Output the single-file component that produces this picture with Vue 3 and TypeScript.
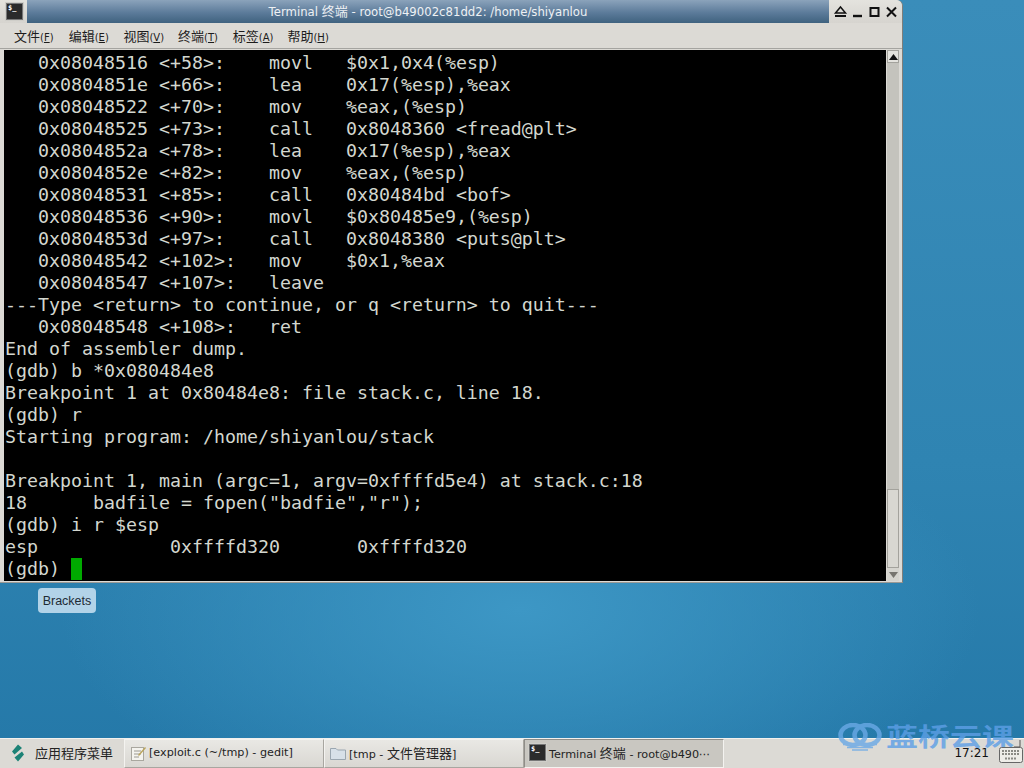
<script setup lang="ts">
const menus: [string, string][] = [
  ['文件', 'F'], ['编辑', 'E'], ['视图', 'V'], ['终端', 'T'], ['标签', 'A'], ['帮助', 'H'],
]
const lines: string[] = [
  '   0x08048516 <+58>:\tmovl   $0x1,0x4(%esp)',
  '   0x0804851e <+66>:\tlea    0x17(%esp),%eax',
  '   0x08048522 <+70>:\tmov    %eax,(%esp)',
  '   0x08048525 <+73>:\tcall   0x8048360 <fread@plt>',
  '   0x0804852a <+78>:\tlea    0x17(%esp),%eax',
  '   0x0804852e <+82>:\tmov    %eax,(%esp)',
  '   0x08048531 <+85>:\tcall   0x80484bd <bof>',
  '   0x08048536 <+90>:\tmovl   $0x80485e9,(%esp)',
  '   0x0804853d <+97>:\tcall   0x8048380 <puts@plt>',
  '   0x08048542 <+102>:\tmov    $0x1,%eax',
  '   0x08048547 <+107>:\tleave  ',
  '---Type <return> to continue, or q <return> to quit---',
  '   0x08048548 <+108>:\tret    ',
  'End of assembler dump.',
  '(gdb) b *0x080484e8',
  'Breakpoint 1 at 0x80484e8: file stack.c, line 18.',
  '(gdb) r',
  'Starting program: /home/shiyanlou/stack ',
  ' ',
  'Breakpoint 1, main (argc=1, argv=0xffffd5e4) at stack.c:18',
  '18\tbadfile = fopen("badfie","r");',
  '(gdb) i r $esp',
  'esp            0xffffd320\t0xffffd320',
]
</script>

<template>
  <div class="desktop">
    <section class="window">
      <header class="titlebar">
        <div class="app-icon"><span>$_</span></div>
        <div class="title">Terminal <span class="cjk">终端</span> - root@b49002c81dd2: /home/shiyanlou</div>
        <div class="controls">
          <svg width="15" height="15" viewBox="0 0 15 15"><path d="M7.5 3 L12.5 9 H2.5 Z" fill="none" stroke="#111" stroke-width="1.5"/><path d="M2 12 H13" stroke="#111" stroke-width="2"/></svg>
          <svg width="15" height="15" viewBox="0 0 15 15"><path d="M3 12 H12" stroke="#111" stroke-width="2.4"/></svg>
          <svg width="15" height="15" viewBox="0 0 15 15"><rect x="3.5" y="4" width="8" height="8" fill="none" stroke="#111" stroke-width="2"/></svg>
          <svg width="15" height="15" viewBox="0 0 15 15"><path d="M3 3.5 L12 12.5 M12 3.5 L3 12.5" stroke="#111" stroke-width="2"/></svg>
        </div>
      </header>
      <nav class="menubar">
        <span v-for="m in menus" :key="m[1]" class="menu">{{ m[0] }}<small>(<u>{{ m[1] }}</u>)</small></span>
      </nav>
      <div class="body">
        <div class="terminal">
          <div v-for="(l, i) in lines" :key="i" class="line">{{ l }}</div>
          <div class="line">(gdb) <span class="cursor"></span></div>
        </div>
        <div class="scrollbar">
          <div class="arrow"><svg width="9" height="6" viewBox="0 0 9 6"><path d="M4.5 0 L9 6 H0 Z" fill="#111"/></svg></div>
          <div class="trough"><div class="thumb"></div></div>
          <div class="arrow down"><svg width="9" height="6" viewBox="0 0 9 6"><path d="M0 0 H9 L4.5 6 Z" fill="#77756f"/></svg></div>
        </div>
      </div>
    </section>

    <div class="tooltip">Brackets</div>

    <div class="watermark">
      <svg width="44" height="28" viewBox="0 0 44 28">
        <ellipse cx="15" cy="12" rx="12.5" ry="10" fill="none" stroke="#6aa9e6" stroke-width="4.5"/>
        <ellipse cx="29" cy="12" rx="12.5" ry="10" fill="none" stroke="#6aa9e6" stroke-width="4.5"/>
        <path d="M5 21.5 H39 M9 24.5 H35 M14 27 H30" stroke="#6aa9e6" stroke-width="1.6"/>
      </svg>
      <span>蓝桥云课</span>
    </div>

    <footer class="taskbar">
      <div class="start">
        <svg width="14" height="18" viewBox="0 0 14 18"><path d="M7 0.5 L11 4 L3.5 10.5 L1 7.5 Z M11 7.5 L13 10.5 L7 17.5 L3.5 13.5 Z" fill="#1c8276"/></svg>
        <span>应用程序菜单</span>
      </div>
      <div class="task">
        <svg width="18" height="18" viewBox="0 0 18 18"><rect x="2.5" y="3.5" width="12" height="13" fill="#f4f3ee" stroke="#a9a79f"/><path d="M5 7 H12 M5 10 H12 M5 13 H10" stroke="#9c9a92"/><path d="M9 11 L16 3 L17 4 L10 12 Z" fill="#b9a35a"/></svg>
        <span>[exploit.c (~/tmp) - gedit]</span>
      </div>
      <div class="task">
        <svg width="18" height="18" viewBox="0 0 18 18"><path d="M1.5 4.5 H7 L8.5 6 H16.5 V15.5 H1.5 Z" fill="#d7e0e8" stroke="#9aa6b0"/></svg>
        <span>[tmp - <span class="cjk">文件管理器</span>]</span>
      </div>
      <div class="task active">
        <div class="app-icon small"><span>$_</span></div>
        <span>Terminal <span class="cjk">终端</span> - root@b490⋯</span>
      </div>
      <div class="clock">17:21</div>
      <div class="kbd">
        <svg width="26" height="28" viewBox="0 0 26 28"><path d="M22 1 V8 H16" fill="none" stroke="#555"/><rect x="1.5" y="8.5" width="23" height="15" rx="2" fill="#eeede8" stroke="#666"/><path d="M4 12 H22 M4 15 H22 M7 19.5 H19" stroke="#8a8a84" stroke-width="2" stroke-dasharray="2 1"/></svg>
      </div>
    </footer>
  </div>
</template>

<style>
html, body { margin: 0; padding: 0; }
</style>

<style scoped>
.desktop {
  position: relative;
  width: 1024px;
  height: 768px;
  overflow: hidden;
  display: flex;
  flex-direction: column;
  justify-content: space-between;
  background:
    radial-gradient(ellipse 460px 220px at 520px 610px, #3d97c5 0%, rgba(61, 151, 197, 0) 100%),
    linear-gradient(180deg, #3a8dba 0%, #2f84b2 60%, #2478a8 100%);
  font-family: "DejaVu Sans", "Noto Sans CJK SC", sans-serif;
}
.cjk { font-size: 13px; }
.window {
  width: 903px;
  height: 583px;
  box-sizing: border-box;
  background: #dcdad5;
  border-right: 1px solid #7f7e7a;
  border-bottom: 1px solid #9a9995;
  border-radius: 0 6px 0 0;
  display: flex;
  flex-direction: column;
}
.titlebar {
  height: 23px;
  display: flex;
  align-items: center;
  flex: none;
  background: linear-gradient(180deg, #e4e3de, #d6d4cf);
  border-radius: 0 6px 0 0;
}
.app-icon {
  width: 17px;
  height: 17px;
  margin-left: 6px;
  box-sizing: border-box;
  border: 1px solid #777;
  outline: 1px solid #cfcec9;
  background: #2b2b2b;
  color: #fff;
  font: bold 7px/8px "DejaVu Sans Mono", monospace;
  padding-left: 1px;
  flex: none;
}
.title {
  flex: 1;
  align-self: stretch;
  margin-left: 4px;
  background: linear-gradient(180deg, #8ba3bb 0%, #5c7b9a 55%, #3f627f 100%);
  color: #eef1f4;
  font-size: 11.7px;
  line-height: 23px;
  text-align: center;
}
.controls {
  width: 73px;
  flex: none;
  display: flex;
  justify-content: flex-end;
  gap: 2px;
  padding-right: 3px;
  box-sizing: border-box;
}
.menubar {
  height: 26px;
  flex: none;
  display: flex;
  align-items: center;
  padding: 0 0 1px 14px;
  box-sizing: border-box;
  font-size: 13px;
  color: #1c1c1c;
  border-bottom: 1px solid #a5a4a0;
}
.menu { width: 54.7px; flex: none; white-space: nowrap; }
.menu small { font-size: 10px; }
.menu u { text-underline-offset: 1px; }
.body {
  flex: 1;
  min-height: 0;
  display: flex;
  padding: 1px 3px 1px 4px;
}
.terminal {
  width: 882px;
  flex: none;
  background: #000;
  color: #d3d7cf;
  font-family: "DejaVu Sans Mono", monospace;
  font-size: 18.27px;
  overflow: hidden;
  padding-top: 2px;
  padding-left: 1px;
  box-sizing: border-box;
}
.line {
  height: 22px;
  line-height: 22px;
  white-space: pre;
  tab-size: 8;
}
.cursor {
  display: inline-block;
  width: 11px;
  height: 22px;
  background: #00aa00;
  vertical-align: top;
}
.scrollbar {
  width: 12px;
  margin-left: 1px;
  flex: none;
  display: flex;
  flex-direction: column;
  background: #c4c3bd;
}
.arrow {
  height: 13px;
  flex: none;
  box-sizing: border-box;
  border: 1px solid #a3a29c;
  background: #e3e2dd;
  display: flex;
  align-items: center;
  justify-content: center;
}
.arrow.down { border: none; background: #d5d4ce; }
.trough {
  flex: 1;
  display: flex;
  flex-direction: column;
  justify-content: flex-end;
}
.thumb {
  height: 79px;
  box-sizing: border-box;
  border: 1px solid #a3a29c;
  background: #d8d7d1;
}
.tooltip {
  position: absolute;
  left: 38px;
  top: 588px;
  width: 58px;
  height: 25px;
  line-height: 26px;
  text-align: center;
  border-radius: 4px;
  background: #b2d3e8;
  color: #1d2b35;
  font-family: "Liberation Sans", sans-serif;
  font-size: 12.5px;
}
.watermark {
  position: absolute;
  left: 838px;
  top: 723px;
  display: flex;
  align-items: flex-start;
  gap: 4px;
  color: #5d9fe6;
  font-family: "Noto Sans CJK SC", sans-serif;
  font-weight: 700;
  opacity: 0.8;
  z-index: 2;
  white-space: nowrap;
}
.watermark span {
  display: block;
  font-size: 32px;
  line-height: 24px;
  height: 24px;
  transform: scaleY(0.78);
}
.taskbar {
  height: 30px;
  flex: none;
  position: relative;
  display: flex;
  box-sizing: border-box;
  background: #dcdad5;
  border-top: 1px solid #f2f1ee;
  font-size: 11.2px;
  color: #232323;
}
.start {
  width: 124px;
  flex: none;
  display: flex;
  align-items: center;
  gap: 10px;
  padding: 0 0 2px 11px;
  box-sizing: border-box;
  font-size: 13px;
}
.task {
  width: 200px;
  flex: none;
  display: flex;
  align-items: center;
  gap: 2px;
  padding: 0 0 2px 4px;
  box-sizing: border-box;
  border: 1px solid #a8a6a0;
  border-top-color: #f4f3f0;
  border-left-color: #f4f3f0;
  background: linear-gradient(180deg, #e9e8e4, #d9d7d2);
  white-space: nowrap;
  overflow: hidden;
}
.task.active {
  background: #c9c7c1;
  border-top-color: #8f8d88;
  border-left-color: #8f8d88;
  border-right-color: #f4f3f0;
  border-bottom-color: #f4f3f0;
}
.app-icon.small { margin: 0 1px 0 0; }
.clock {
  margin-left: auto;
  align-self: center;
  font-size: 12px;
  margin-right: 8px;
  padding-bottom: 2px;
  color: #111;
  z-index: 3;
}
.kbd {
  width: 27px;
  flex: none;
  display: flex;
  align-items: center;
  justify-content: center;
  margin-top: -1px;
  z-index: 3;
}
</style>
